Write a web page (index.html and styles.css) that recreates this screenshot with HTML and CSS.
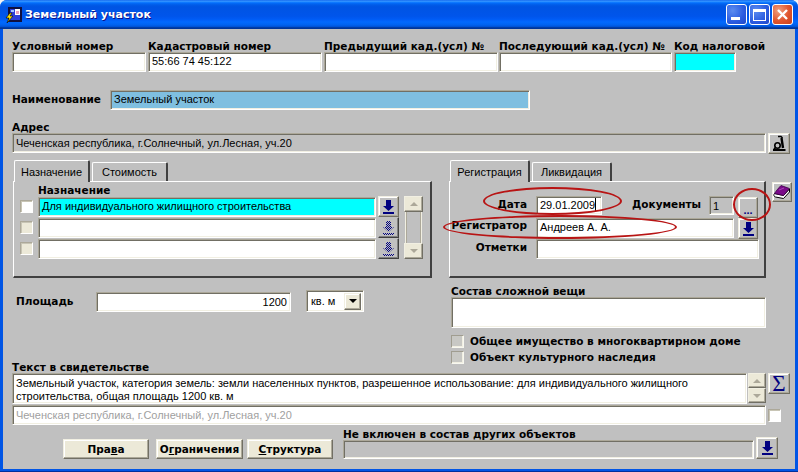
FILE: index.html
```html
<!DOCTYPE html>
<html lang="ru">
<head>
<meta charset="utf-8">
<title>Земельный участок</title>
<link rel="stylesheet" href="styles.css">
</head>
<body>
<div class="window">
  <header class="titlebar">
    <svg class="app-icon" width="17" height="16" viewBox="0 0 17 16"><rect x="3" y="0" width="14" height="15" fill="#101040"/><rect x="5" y="2" width="10" height="11" fill="#2f3fd8"/><rect x="10" y="2" width="5" height="6" fill="#fff"/><path d="M11 4h3v3h-3z" fill="#e8a0c0"/><path d="M6 3h3v2H6z" fill="#9fc0ff"/><path d="M5 6 1 11h3l-2 5 6-7H5l2-3z" fill="#ffe000" stroke="#000" stroke-width=".6"/></svg>
    <span class="title-text">Земельный участок</span>
    <div class="win-buttons">
      <div class="win-btn"><span class="glyph-min"></span></div>
      <div class="win-btn"><span class="glyph-max"></span></div>
      <div class="win-btn win-close"><svg width="13" height="13" viewBox="0 0 13 13"><path d="M2 2l9 9M11 2l-9 9" stroke="#fff" stroke-width="2.4"/></svg></div>
    </div>
  </header>

  <main class="form">
    <section class="top-row">
      <div class="fld w-a"><label class="lbl">Условный номер</label><div class="input h20"></div></div>
      <div class="fld w-b"><label class="lbl">Кадастровый номер</label><div class="input h20">55:66 74 45:122</div></div>
      <div class="fld w-b"><label class="lbl">Предыдущий кад.(усл) №</label><div class="input h20"></div></div>
      <div class="fld w-c"><label class="lbl">Последующий кад.(усл) №</label><div class="input h20"></div></div>
      <div class="fld w-d"><label class="lbl">Код налоговой</label><div class="input h20 cyan"></div></div>
    </section>

    <section class="name-row">
      <label class="lbl name-lbl">Наименование</label>
      <div class="input h20 sky name-input">Земельный участок</div>
    </section>

    <section class="addr">
      <label class="lbl">Адрес</label>
      <div class="addr-row">
        <div class="input h20 gray addr-input">Чеченская республика, г.Солнечный, ул.Лесная, уч.20</div>
        <button class="btn icon-btn w22"><svg width="16" height="17" viewBox="0 0 16 17"><path d="M7 1.500h3l1.500 1.500" fill="none" stroke="#000" stroke-width="1.500"/><path d="M10.500 3 12 13" stroke="#000" stroke-width="2.400"/><circle cx="6.500" cy="10.500" r="2.700" fill="none" stroke="#000" stroke-width="1.600"/><path d="M2 15h12.500" stroke="#000" stroke-width="1.800"/><path d="M4.500 12.500 2.500 15" stroke="#000" stroke-width="1.600"/></svg></button>
      </div>
    </section>

    <section class="columns">
      <div class="col-left">
        <nav class="tabs">
          <span class="tab active t76">Назначение</span>
          <span class="tab t76">Стоимость</span>
        </nav>
        <div class="panel left-panel">
          <div class="lbl purpose-title">Назначение</div>
          <div class="purpose-body">
            <div class="purpose-rows">
              <div class="purpose-row">
                <span class="check white"></span>
                <div class="input purpose-input cyan">Для индивидуального жилищного строительства</div>
                <button class="btn arrow-btn"><svg class="dl" width="11" height="14" viewBox="0 0 11 14"><path d="M3 0h5v6h3L5.500 11 0 6h3zM0 12h11v2H0z" fill="#000080"/></svg></button>
              </div>
              <div class="purpose-row">
                <span class="check"></span>
                <div class="input purpose-input"></div>
                <button class="btn arrow-btn dark"><svg class="dl" width="11" height="14" viewBox="0 0 11 14"><defs><pattern id="dith" width="2" height="2" patternUnits="userSpaceOnUse"><rect width="1" height="1" fill="#000080" shape-rendering="crispEdges"/><rect x="1" y="1" width="1" height="1" fill="#000080" shape-rendering="crispEdges"/></pattern></defs><path d="M3 0h5v6h3L5.500 11 0 6h3zM0 12h11v2H0z" fill="url(#dith)"/></svg></button>
              </div>
              <div class="purpose-row">
                <span class="check"></span>
                <div class="input purpose-input"></div>
                <button class="btn arrow-btn dark"><svg class="dl" width="11" height="14" viewBox="0 0 11 14"><path d="M3 0h5v6h3L5.500 11 0 6h3zM0 12h11v2H0z" fill="url(#dith)"/></svg></button>
              </div>
            </div>
            <div class="vscroll">
              <span class="sb-btn"><i class="tri up"></i></span>
              <span class="sb-track"></span>
              <span class="sb-btn"><i class="tri down"></i></span>
            </div>
          </div>
        </div>
        <div class="area-row">
          <label class="lbl area-lbl">Площадь</label>
          <div class="input area-input">1200</div>
          <div class="select">
            <span>кв. м</span>
            <button class="btn cream sel-btn"><i class="tri down black"></i></button>
          </div>
        </div>
      </div>

      <div class="col-right">
        <nav class="tabs">
          <span class="tab active t80">Регистрация</span>
          <span class="tab t80">Ликвидация</span>
        </nav>
        <div class="reg-line">
          <div class="panel right-panel">
            <div class="reg-row">
              <label class="lbl reg-lbl">Дата</label>
              <div class="input date-input">29.01.2009<span class="caret"></span></div>
              <label class="lbl doc-lbl">Документы</label>
              <div class="input gray doc-input">1</div>
              <button class="btn dots-btn">...</button>
            </div>
            <div class="reg-row">
              <label class="lbl reg-lbl reg-lbl-up">Регистратор</label>
              <div class="input registrar">Андреев А. А.</div>
              <button class="btn arrow-btn reg-arrow"><svg class="dl" width="11" height="14" viewBox="0 0 11 14"><path d="M3 0h5v6h3L5.500 11 0 6h3zM0 12h11v2H0z" fill="#000080"/></svg></button>
            </div>
            <div class="reg-row">
              <label class="lbl reg-lbl">Отметки</label>
              <div class="input notes"></div>
            </div>
          </div>
          <button class="btn icon-btn book-btn"><svg width="18" height="16" viewBox="0 0 18 16"><path d="M1.500 9.500 10.500 11.500 16.500 5V8l-6 6.500-8-1.500C0.500 12.500 0.500 10.500 1.500 9.500z" fill="#fff" stroke="#000"/><path d="M1.500 9.500C3 7 6 3.500 8 1.500L16.500 4.500 10.500 11.500z" fill="#7a0a8a" stroke="#3a0045" stroke-width=".8"/><path d="M6 6l5-2" stroke="#a848b8"/></svg></button>
        </div>
        <label class="lbl complex-lbl">Состав сложной вещи</label>
        <div class="input complex"></div>
        <div class="opt opt-1"><span class="check plain"></span><span class="lbl">Общее имущество в многоквартирном доме</span></div>
        <div class="opt"><span class="check plain"></span><span class="lbl">Объект культурного наследия</span></div>
      </div>
    </section>

    <section class="cert">
      <label class="lbl">Текст в свидетельстве</label>
      <div class="cert-row">
        <div class="input cert-text">Земельный участок, категория земель: земли населенных пунктов, разрешенное использование: для индивидуального жилищного строительства, общая площадь 1200 кв. м</div>
        <div class="cert-scroll">
          <span class="sb-btn"><i class="tri up"></i></span>
          <span class="sb-btn"><i class="tri down"></i></span>
        </div>
        <button class="btn icon-btn w22 sigma">Σ</button>
      </div>
      <div class="cert-row2">
        <div class="input cert-addr">Чеченская республика, г.Солнечный, ул.Лесная, уч.20</div>
        <span class="check white"></span>
      </div>
    </section>

    <footer class="bottom">
      <button class="btn cream act"><span class="lbl">Пра<u>в</u>а</span></button>
      <button class="btn cream act"><span class="lbl">О<u>г</u>раничения</span></button>
      <button class="btn cream act"><span class="lbl"><u>С</u>труктура</span></button>
      <div class="parent">
        <label class="lbl">Не включен в состав других объектов</label>
        <div class="parent-row">
          <div class="input gray parent-input"></div>
          <button class="btn arrow-btn parent-arrow"><svg class="dl" width="11" height="14" viewBox="0 0 11 14"><path d="M3 0h5v6h3L5.500 11 0 6h3zM0 12h11v2H0z" fill="#000080"/></svg></button>
        </div>
      </div>
    </footer>
  </main>

  <span class="ring ring-date"></span>
  <span class="ring ring-reg"></span>
  <span class="ring ring-dots"></span>
</div>
</body>
</html>
```
FILE: styles.css
```css
* { box-sizing: border-box; }
html, body { margin: 0; height: 100%; background: #f4f4f4; overflow: hidden; }
body { font: 11px "Liberation Sans", Arial, sans-serif; color: #000; }

.window {
  position: relative;
  width: 798px; height: 472px;
  display: flex; flex-direction: column;
  background: #0055e5;
  border-bottom: 1px solid #00309c;
  border-radius: 7px 7px 0 0;
  overflow: hidden;
}
.titlebar {
  height: 29px; flex: none;
  display: flex; align-items: center;
  padding: 0 5px 0 5px;
  background: linear-gradient(180deg,#0058e6 0,#3a93ff 3%,#288eff 6%,#127dff 8%,#036ffc 10%,#0262ee 14%,#0057e5 20%,#0054e3 24%,#0055eb 56%,#005bf5 66%,#026afe 76%,#0062ef 86%,#0052d6 92%,#0040ab 94%,#003092 100%);
}
.app-icon { flex: none; margin-right: 3px; }
.title-text { color: #fff; font: bold 11px "DejaVu Sans", sans-serif; text-shadow: 1px 1px #0f1089; }
.win-buttons { margin-left: auto; display: flex; gap: 2px; }
.win-btn {
  width: 21px; height: 21px; border: 1px solid #fff; border-radius: 3px;
  display: flex; align-items: center; justify-content: center; position: relative;
  background: radial-gradient(circle at 30% 30%, #5c8cf0, #2a5be0 60%, #2048c8);
}
.win-close { background: radial-gradient(circle at 30% 30%, #f0a080, #e0552e 55%, #c8401c); }
.glyph-min { width: 9px; height: 3px; background: #fff; margin-top: 8px; margin-right: 3px; }
.glyph-max { width: 13px; height: 12px; border: 1px solid #fff; border-top-width: 3px; }

.form {
  flex: 1;
  margin: 0 3px 2px;
  padding: 0 5px 0 9px;
  background: #c0c0c0;
  display: flex; flex-direction: column;
}

.lbl { font: bold 10.5px/12px "DejaVu Sans", sans-serif; display: block; white-space: nowrap; color: #000; }

.input {
  display: block;
  border: 1px solid; border-color: #aca899 #fff #fff #aca899;
  box-shadow: inset 1px 1px #716f64, inset -1px -1px #f1efe2;
  background: #fff;
  padding: 1px 3px;
  font-size: 11px; line-height: 16px;
  white-space: nowrap; overflow: hidden;
}
.h20 { height: 20px; }
.cyan { background: #00ffff; }
.sky { background: #7fbfe0; }
.gray { background: #c0c0c0; }

.btn {
  display: flex; align-items: center; justify-content: center;
  padding: 0; margin: 0;
  background: #c0c0c0;
  border: 1px solid; border-color: #f1efe2 #716f64 #716f64 #f1efe2;
  box-shadow: inset -1px -1px #aca899, inset 1px 1px #fff;
  font: inherit; color: #000;
}
.cream { background: #ece9d8; }
.icon-btn { height: 21px; }
.w22 { width: 22px; flex: none; }

.check {
  flex: none; display: block; width: 13px; height: 13px;
  border: 1px solid; border-color: #aca899 #fff #fff #aca899;
  box-shadow: inset 1px 1px #c8c5b5;
  background: #ece9d8;
}
.check.white { background: #fff; }
.check.plain { background: #c8c8c4; border-color: #a09d90 #f8f8f0 #f8f8f0 #a09d90; box-shadow: inset -1px -1px #f1efe2; }

.tri { display: block; width: 0; height: 0; border-left: 4px solid transparent; border-right: 4px solid transparent; }
.tri.up { border-bottom: 4px solid #aca899; }
.tri.down { border-top: 4px solid #aca899; }
.tri.black { border-top-color: #000; }

/* top */
.top-row { display: flex; gap: 2px; margin-top: 11px; }
.top-row .input { padding-top: 0; }
.w-a { width: 134px; }
.w-b { width: 174px; }
.w-c { width: 173px; margin-left: -1px; }
.w-d { width: 62px; overflow: visible; }

.name-row { display: flex; align-items: center; margin-top: 18px; }
.name-lbl { width: 98px; margin-top: -2px; }
.name-input { width: 420px; padding-top: 0; }

.addr { margin-top: 11px; }
.addr-row { display: flex; gap: 2px; }
.addr-input { width: 754px; }
.addr-input, .addr-row .btn { flex: none; }

/* columns */
.columns { display: flex; margin-top: 6px; height: 201px; }
.col-left { width: 437px; padding-left: 1px; flex: none; }
.col-right { flex: 1; }

.tabs { display: flex; height: 21px; align-items: flex-end; gap: 2px; padding-left: 1px; position: relative; z-index: 1; }
.tab {
  display: flex; align-items: center; justify-content: center;
  height: 19px;
  background: #c0c0c0;
  border: 1px solid; border-color: #fff #404040 #fff #fff;
  border-bottom: 0;
  border-right-width: 2px;
  border-radius: 2px 2px 0 0;
  font-size: 11px;
}
.tab.active { height: 22px; margin-bottom: -1px; }
.t76 { width: 76px; }
.t80 { width: 80px; }
.panel {
  height: 97px;
  border: 1px solid; border-color: #fff #404040 #404040 #fff;
  border-right-width: 2px; border-bottom-width: 2px;
}
.left-panel { width: 419px; padding: 2px 8px 0 6px; }
.purpose-title { margin-left: 18px; height: 12px; }
.purpose-body { display: flex; gap: 5px; }
.purpose-rows { width: 385px; margin-left: 0; }
.purpose-row { display: flex; align-items: center; height: 21px; }
.purpose-row .check { margin-right: 5px; }
.purpose-input { width: 338px; height: 20px; padding-top: 0; }
.arrow-btn { width: 21px; height: 21px; margin-left: 2px; flex: none; }
.arrow-btn.dark { border-color: #c0c0c0 #404040 #404040 #c0c0c0; box-shadow: inset -1px -1px #808080; }
.vscroll { width: 19px; height: 63px; display: flex; flex-direction: column; flex: none; }
.sb-btn {
  display: flex; align-items: center; justify-content: center; flex: none;
  height: 16px; width: 100%;
  background: #ece9d8;
  border: 1px solid; border-color: #f1efe2 #716f64 #716f64 #f1efe2;
  box-shadow: inset -1px -1px #aca899;
}
.sb-track { flex: 1; border-left: 1px solid #f1efe2; border-right: 1px solid #f1efe2; margin: 0 1px; box-shadow: inset 1px 0 #aca899, inset -1px 0 #aca899; }

.area-row { display: flex; align-items: center; margin-top: 12px; height: 22px; }
.area-lbl { width: 83px; padding-left: 3px; }
.area-input { width: 195px; height: 20px; margin-top: 2px; text-align: right; }
.select {
  width: 58px; height: 22px; margin-left: 15px;
  display: flex; align-items: center; justify-content: space-between;
  background: #fff; padding: 2px 2px 2px 4px;
  border: 1px solid; border-color: #aca899 #fff #fff #aca899;
  box-shadow: inset 1px 1px #716f64, inset -1px -1px #f1efe2;
}
.sel-btn { width: 17px; height: 17px; }

.reg-line { display: flex; align-items: flex-start; gap: 6px; }
.right-panel { width: 317px; padding: 14px 0 0 1px; display: flex; flex-direction: column; flex: none; }
.book-btn { width: 20px; height: 20px; margin-top: 1px; flex: none; }
.reg-row { display: flex; align-items: flex-start; height: 22px; }
.reg-row:nth-child(2), .reg-row:nth-child(3) { height: 21px; }
.reg-row > * { flex: none; }
.reg-lbl { width: 76px; text-align: right; margin-right: 9px; padding-top: 2px; }
.reg-lbl-up { padding-top: 1px; }
.date-input { width: 66px; height: 19px; padding-top: 0; }
.caret { display: inline-block; width: 1px; height: 13px; background: #000; vertical-align: -2px; }
.doc-lbl { margin-left: 30px; width: 77px; padding-top: 2px; }
.doc-input { width: 25px; height: 19px; }
.dots-btn { width: 20px; height: 21px; margin: 1px 0 0 4px; color: #000080; font-weight: bold; padding-top: 5px; }
.registrar { width: 198px; height: 20px; padding-top: 0; }
.reg-arrow { width: 20px; margin-left: 4px; }
.notes { width: 223px; height: 20px; }

.complex-lbl { margin-top: 7px; margin-left: 2px; }
.complex { width: 315px; height: 31px; margin-left: 2px; }
.opt { display: flex; align-items: center; gap: 6px; height: 16px; margin-left: 2px; }
.opt-1 { margin-top: 5px; }

/* certificate */
.cert-row { display: flex; }
.cert-text { width: 735px; height: 31px; flex: none; white-space: normal; line-height: 13px; padding-top: 3px; }
.cert-scroll { width: 18px; margin-left: 1px; flex: none; display: flex; flex-direction: column; }
.cert-scroll .sb-btn { height: 15px; }
.sigma { margin-left: 2px; font: 23px/1 "Liberation Serif", serif; color: #000080; }
.cert-row2 { display: flex; align-items: center; gap: 2px; margin-top: 1px; }
.cert-addr { width: 754px; height: 20px; flex: none; color: #a0a0a0; }

.bottom { display: flex; align-items: flex-end; margin-top: 3px; padding-left: 51px; }
.act { width: 86px; height: 20px; }
.act:nth-child(2) { margin-left: 7px; width: 87px; }
.act:nth-child(3) { margin-left: 4px; }
.parent { margin-left: 10px; }
.parent-row { display: flex; align-items: flex-end; gap: 2px; }
.parent-input { width: 411px; height: 19px; }
.parent-arrow { width: 22px; height: 22px; margin: -3px 0 0 0; }

/* hand-drawn annotation marks over the form */
.ring { position: absolute; border: 2px solid #b81414; border-radius: 50%; pointer-events: none; }
.ring-date { left: 483px; top: 187px; width: 139px; height: 28px; }
.ring-reg { left: 443px; top: 215px; width: 234px; height: 24px; }
.ring-dots { left: 733px; top: 188px; width: 38px; height: 33px; }
```
